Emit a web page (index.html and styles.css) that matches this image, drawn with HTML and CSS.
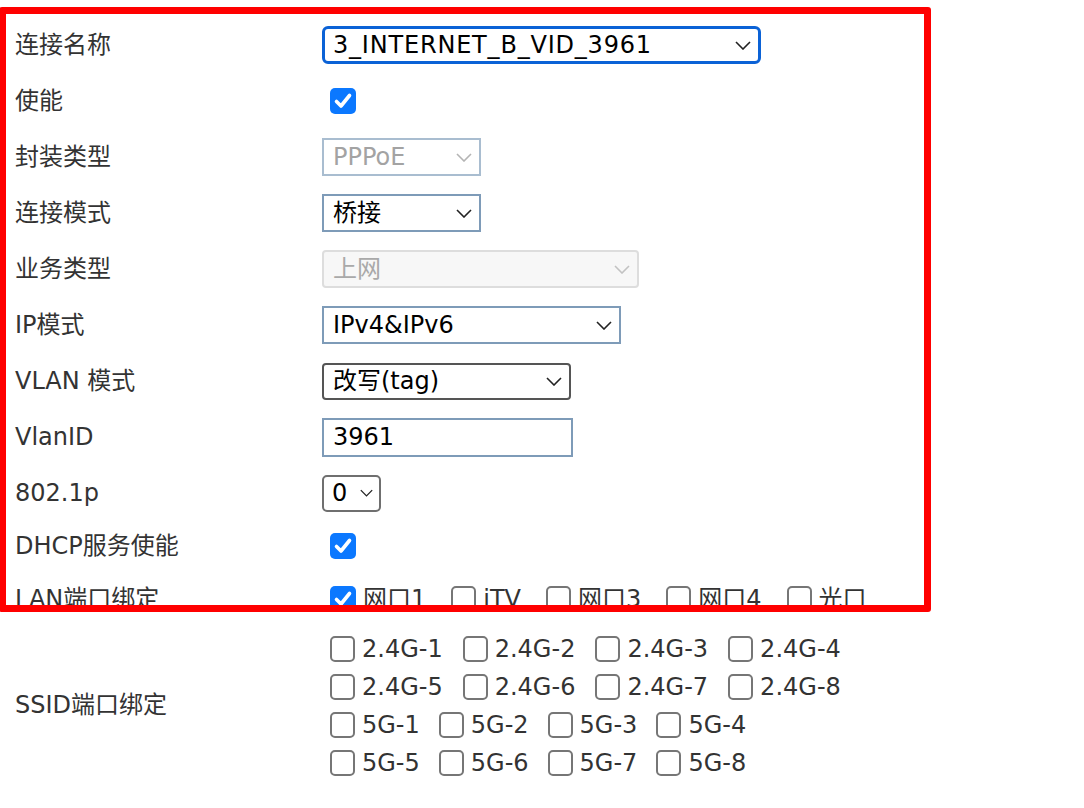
FILE: index.html
```html
<!DOCTYPE html>
<html lang="zh-CN">
<head>
<meta charset="utf-8">
<title>WAN 连接配置</title>
<link rel="stylesheet" href="styles.css">
</head>
<body>
<div class="page">
  <form class="form">
    <div class="label">连接名称</div>
    <div class="ctrl">
      <div class="select sel-focus w-name"><span class="val wide">3_INTERNET_B_VID_3961</span><svg class="chev" viewBox="0 0 16 9"><polyline points="1,1 8,8 15,1"/></svg></div>
    </div>

    <div class="label">使能</div>
    <div class="ctrl"><span class="cb checked"><svg viewBox="0 0 26 26"><path d="M6.5 13.5 L11 18 L19.5 7.5"/></svg></span></div>

    <div class="label">封装类型</div>
    <div class="ctrl">
      <div class="select sel-light w-short"><span class="val muted">PPPoE</span><svg class="chev chev-light" viewBox="0 0 16 9"><polyline points="1,1 8,8 15,1"/></svg></div>
    </div>

    <div class="label">连接模式</div>
    <div class="ctrl">
      <div class="select sel-blue w-short"><span class="val">桥接</span><svg class="chev" viewBox="0 0 16 9"><polyline points="1,1 8,8 15,1"/></svg></div>
    </div>

    <div class="label">业务类型</div>
    <div class="ctrl">
      <div class="select sel-disabled w-service"><span class="val dim">上网</span><svg class="chev chev-dim" viewBox="0 0 16 9"><polyline points="1,1 8,8 15,1"/></svg></div>
    </div>

    <div class="label">IP模式</div>
    <div class="ctrl">
      <div class="select sel-blue w-ip"><span class="val">IPv4&amp;IPv6</span><svg class="chev" viewBox="0 0 16 9"><polyline points="1,1 8,8 15,1"/></svg></div>
    </div>

    <div class="label">VLAN 模式</div>
    <div class="ctrl">
      <div class="select sel-dark w-vlan"><span class="val">改写(tag)</span><svg class="chev" viewBox="0 0 16 9"><polyline points="1,1 8,8 15,1"/></svg></div>
    </div>

    <div class="label">VlanID</div>
    <div class="ctrl">
      <div class="input w-vid">3961</div>
    </div>

    <div class="label">802.1p</div>
    <div class="ctrl">
      <div class="select sel-gray w-prio"><span class="val">0</span><svg class="chev chev-small" viewBox="0 0 16 9"><polyline points="1,1 8,8 15,1"/></svg></div>
    </div>

    <div class="label">DHCP服务使能</div>
    <div class="ctrl"><span class="cb checked"><svg viewBox="0 0 26 26"><path d="M6.5 13.5 L11 18 L19.5 7.5"/></svg></span></div>

    <div class="label">LAN端口绑定</div>
    <div class="ctrl lan">
      <span class="opt"><span class="cb checked"><svg viewBox="0 0 26 26"><path d="M6.5 13.5 L11 18 L19.5 7.5"/></svg></span>网口1</span>
      <span class="opt"><span class="cb"></span>iTV</span>
      <span class="opt"><span class="cb"></span>网口3</span>
      <span class="opt"><span class="cb"></span>网口4</span>
      <span class="opt"><span class="cb"></span>光口</span>
    </div>

    <div class="label">SSID端口绑定</div>
    <div class="ctrl ssid">
      <div class="ssid-row g24">
        <span class="opt"><span class="cb"></span>2.4G-1</span>
        <span class="opt"><span class="cb"></span>2.4G-2</span>
        <span class="opt"><span class="cb"></span>2.4G-3</span>
        <span class="opt"><span class="cb"></span>2.4G-4</span>
      </div>
      <div class="ssid-row g24">
        <span class="opt"><span class="cb"></span>2.4G-5</span>
        <span class="opt"><span class="cb"></span>2.4G-6</span>
        <span class="opt"><span class="cb"></span>2.4G-7</span>
        <span class="opt"><span class="cb"></span>2.4G-8</span>
      </div>
      <div class="ssid-row">
        <span class="opt"><span class="cb"></span>5G-1</span>
        <span class="opt"><span class="cb"></span>5G-2</span>
        <span class="opt"><span class="cb"></span>5G-3</span>
        <span class="opt"><span class="cb"></span>5G-4</span>
      </div>
      <div class="ssid-row">
        <span class="opt"><span class="cb"></span>5G-5</span>
        <span class="opt"><span class="cb"></span>5G-6</span>
        <span class="opt"><span class="cb"></span>5G-7</span>
        <span class="opt"><span class="cb"></span>5G-8</span>
      </div>
    </div>
  </form>
  <div class="highlight"></div>
</div>
</body>
</html>
```

FILE: styles.css
```css
html, body {
  margin: 0;
  padding: 0;
  background: #ffffff;
}

body {
  font-family: "DejaVu Sans", "Noto Sans CJK SC", sans-serif;
  font-size: 24px;
  color: #333333;
}

.page {
  position: relative;
  width: 1084px;
  height: 808px;
  overflow: hidden;
}

.form {
  display: grid;
  grid-template-columns: 307px auto;
  grid-template-rows: repeat(9, 56px) 50px 56px auto;
  align-items: center;
  padding: 17px 0 0 15px;
  margin: 0;
}

.label {
  color: #333333;
  white-space: nowrap;
  line-height: 30px;
}

.ctrl {
  display: flex;
  align-items: center;
}

/* fake selects */
.select {
  box-sizing: border-box;
  height: 38px;
  display: flex;
  align-items: center;
  justify-content: space-between;
  padding: 0 7px 0 9px;
  border: 2px solid #7e9bb8;
  background: #ffffff;
  color: #000000;
}

.val {
  white-space: nowrap;
  line-height: 30px;
}

.val.wide { letter-spacing: 0.8px; }
.val.muted { color: #a3a3a3; }
.val.dim { color: #a9a9a9; }

.chev {
  width: 16px;
  height: 9px;
  flex: none;
  fill: none;
  stroke: #222222;
  stroke-width: 1.6;
}

.chev-light { stroke: #b4b4b4; }
.chev-dim { stroke: #c2c2c2; }
.chev-small { width: 13px; height: 8px; }

.sel-focus {
  border: 3px solid #0b62d6;
  border-radius: 6px;
  padding-left: 8px;
}

.sel-light { border-color: #a9bdd0; }
.sel-blue { border-color: #7e9bb8; }

.sel-disabled {
  border-color: #dddddd;
  background: #f7f7f7;
  border-radius: 4px;
}

.sel-dark {
  border-color: #555555;
  border-radius: 4px;
  height: 37px;
}

.sel-gray {
  border-color: #6f6f6f;
  border-radius: 5px;
  height: 37px;
  padding: 0 6px 0 8px;
  gap: 6px;
}

.w-name { width: 439px; }
.w-short { width: 159px; }
.w-service { width: 317px; }
.w-ip { width: 299px; }
.w-vlan { width: 249px; }
.w-prio { width: 59px; }
.w-vid { width: 251px; }

.input {
  box-sizing: border-box;
  height: 39px;
  border: 2px solid #7e9bb8;
  padding: 0 9px;
  display: flex;
  align-items: center;
  color: #000000;
  line-height: 30px;
}

/* checkboxes */
.cb {
  box-sizing: border-box;
  width: 25px;
  height: 26px;
  flex: none;
  border: 2px solid #767676;
  border-radius: 5px;
  background: #ffffff;
  margin-left: 8px;
  display: inline-block;
}

.cb.checked {
  width: 26px;
  border: none;
  background: #0b78ff;
}

.cb svg {
  display: block;
  width: 26px;
  height: 26px;
  fill: none;
  stroke: #ffffff;
  stroke-width: 3.6;
  stroke-linecap: round;
  stroke-linejoin: round;
}

.opt {
  display: inline-flex;
  align-items: center;
  gap: 7px;
  white-space: nowrap;
  line-height: 30px;
}

.lan .opt { margin-right: 17px; }

.ssid {
  flex-direction: column;
  align-items: flex-start;
  padding-top: 3px;
}

.ssid-row {
  height: 38px;
  display: flex;
  align-items: center;
}

.ssid-row .opt { margin-right: 11px; }
.ssid-row.g24 .opt { margin-right: 12px; }

/* red annotation frame drawn over the screenshot */
.highlight {
  position: absolute;
  left: -1px;
  top: 7px;
  width: 932px;
  height: 605px;
  box-sizing: border-box;
  border: 7px solid #ff0000;
  border-radius: 3px;
  pointer-events: none;
}
```
